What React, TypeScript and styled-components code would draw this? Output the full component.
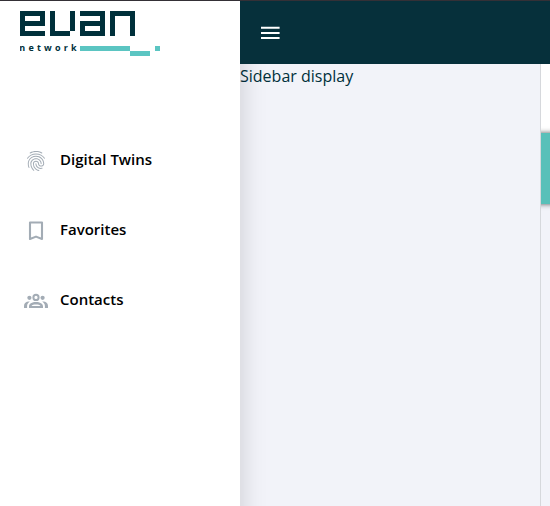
import React from 'react';
import styled, { createGlobalStyle } from 'styled-components';
import { MdFingerprint } from 'react-icons/md';

const GlobalStyle = createGlobalStyle`
  * { box-sizing: border-box; }
  body { margin: 0; overflow: hidden; font-family: 'Open Sans', 'Noto Sans', sans-serif; }
`;

const Window = styled.div`
  display: flex;
  width: 550px;
  height: 506px;
  border-top: 1px solid #343036;
  background: #f2f3f9;
  overflow: hidden;
`;

const Sidebar = styled.aside`
  z-index: 1;
  flex: 0 0 240px;
  height: 560px;
  background: #fff;
  box-shadow: 0 0 25px rgba(0, 0, 0, 0.17);
`;

const Logo = styled.svg`
  display: block;
  margin: 10px 0 0 20px;
`;

const Nav = styled.nav`
  display: flex;
  flex-direction: column;
  padding-top: 67px;
`;

const NavItem = styled.a`
  display: flex;
  align-items: center;
  gap: 12px;
  height: 70px;
  padding: 6px 24px 0;
  color: #000;
  font-size: 15px;
  font-weight: 600;

  svg {
    flex: none;
    color: #a3acb5;
  }
`;

const NavLabel = styled.span`
  margin-top: -5px;
  line-height: 20px;
`;

const Main = styled.div`
  display: flex;
  flex: 1;
  flex-direction: column;
`;

const Toolbar = styled.header`
  z-index: 2;
  display: flex;
  align-items: center;
  flex: 0 0 63px;
  padding-left: 18px;
  background: #06303b;
  color: #fff;
`;

const Body = styled.div`
  display: flex;
  flex: 1;
`;

const Content = styled.main`
  flex: 1;
  color: #00303b;
  font-size: 16px;
  line-height: 24px;
`;

const SidePanel = styled.aside`
  flex: 0 0 10px;
  border-left: 1px solid #d6d8dc;
  overflow: hidden;
`;

const PanelHead = styled.div`
  height: 69px;
  background: #fff;
`;

const PanelAccent = styled.div`
  height: 71px;
  margin: 0 -8px;
  background: #59c0b9;
  box-shadow: 0 0 5px rgba(0, 0, 0, 0.65);
`;

function BookmarkIcon() {
  return (
    <svg width="24" height="24" viewBox="0 0 24 24">
      <path d="M6 3.5H18V20L12 17.6L6 20Z" fill="none" stroke="currentColor" strokeWidth="2.1" strokeLinejoin="round" />
    </svg>
  );
}

function GroupIcon() {
  return (
    <svg width="24" height="24" viewBox="0 0 24 24" fill="currentColor">
      <circle cx="12" cy="8.4" r="2.6" fill="none" stroke="currentColor" strokeWidth="2" />
      <circle cx="5.4" cy="8.8" r="2.1" />
      <circle cx="18.6" cy="8.8" r="2.1" />
      <path d="M0 19V17C0 14 2.5 12.2 5.8 12.6C4.2 13.8 3.1 15.2 3.1 17V19Z" />
      <path d="M24 19V17C24 14 21.5 12.2 18.2 12.6C19.8 13.8 20.9 15.2 20.9 17V19Z" />
      <path fillRule="evenodd" d="M5 19V17.5C5 14.7 8 13 12 13S19 14.7 19 17.5V19ZM7.5 17H16.5C15.8 15.9 14.2 15.5 12 15.5S8.2 15.9 7.5 17Z" />
    </svg>
  );
}

function MenuIcon() {
  return (
    <svg width="24" height="24" viewBox="0 0 24 24">
      <path d="M3 6.8H21.6M3 12H21.6M3 17H21.6" stroke="currentColor" strokeWidth="2" />
    </svg>
  );
}

const items = [
  { label: 'Digital Twins', icon: <MdFingerprint size={24} /> },
  { label: 'Favorites', icon: <BookmarkIcon /> },
  { label: 'Contacts', icon: <GroupIcon /> },
];

export default function App() {
  return (
    <>
      <GlobalStyle />
      <Window>
        <Sidebar>
          <Logo width="140" height="45" viewBox="0 0 140 45" shapeRendering="crispEdges">
            <g fill="#00303b">
              <path fillRule="evenodd" d="M0 0H25V15H5V20H25V25H0ZM5 5H20V10H5Z" />
              <path d="M30 0H35V20H50V0H55V20H50V25H30Z" />
              <path fillRule="evenodd" d="M60 0H85V25H60V10H80V5H60ZM65 15H80V20H65Z" />
              <path d="M90 0H115V25H110V5H95V25H90Z" />
              <text x="-0.7" y="40" fontSize="9" fontWeight="700" textLength="57.4" lengthAdjust="spacing">network</text>
            </g>
            <path fill="#5bc5c2" d="M60 35H110V40H60ZM110 40H130V45H110ZM135 35H140V40H135Z" />
          </Logo>
          <Nav>
            {items.map(({ label, icon }) => (
              <NavItem key={label}>
                {icon}
                <NavLabel>{label}</NavLabel>
              </NavItem>
            ))}
          </Nav>
        </Sidebar>
        <Main>
          <Toolbar><MenuIcon /></Toolbar>
          <Body>
            <Content>Sidebar display</Content>
            <SidePanel>
              <PanelHead />
              <PanelAccent />
            </SidePanel>
          </Body>
        </Main>
      </Window>
    </>
  );
}
